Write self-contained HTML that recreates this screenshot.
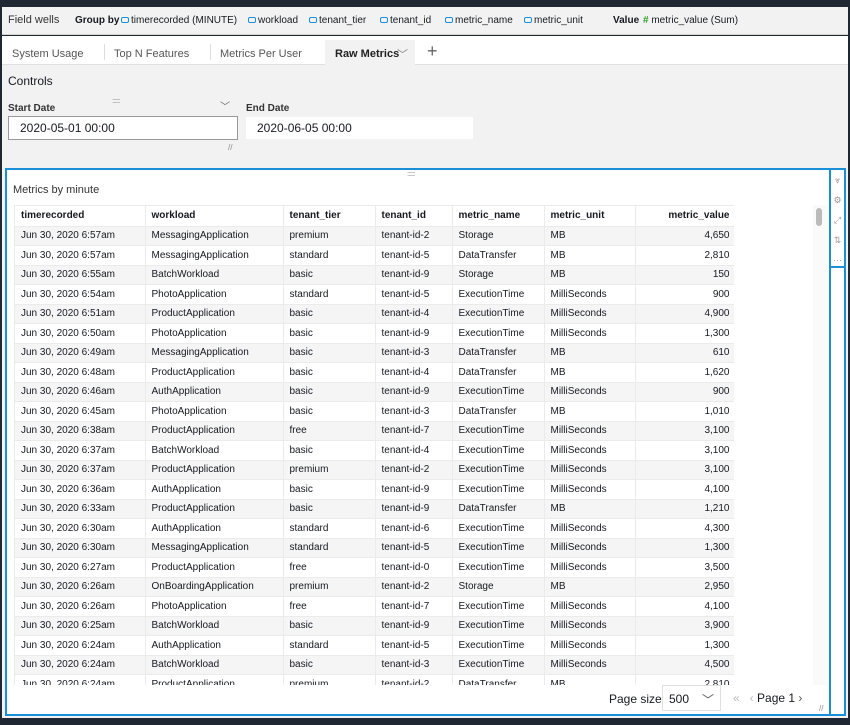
<!DOCTYPE html>
<html><head><meta charset="utf-8"><style>
*{margin:0;padding:0;box-sizing:border-box}
body{width:850px;height:725px;background:#1f2733;font-family:"Liberation Sans",sans-serif;position:relative;overflow:hidden;color:#16191f}
.abs{position:absolute}
#fw{left:2px;top:7px;width:846px;height:28px;background:#f2f2f2;border-bottom:1px solid #d5d5d5;font-size:10px;white-space:nowrap}
#fw span{position:absolute;top:8px}
#tabs{left:2px;top:36px;width:846px;height:29px;background:#fff;border-bottom:1px solid #e0e0e0;font-size:11px;color:#555}
#tabs span{position:absolute;top:11px}
#main{left:2px;top:65px;width:846px;height:653px;background:#f2f2f2}
.inp{background:#fff;font-size:12px;padding-left:11px;line-height:22px}
#vis{left:5px;top:168px;width:826px;height:548px;background:#fff;border:2px solid #1a8fd6}
table{border-collapse:collapse;font-size:10px;table-layout:fixed}
td,th{border-right:1px solid #ebebeb;border-bottom:1px solid #ebebeb;padding:0 6px;height:19.5px;text-align:left;white-space:nowrap;overflow:hidden}
th{height:20px;font-weight:bold}
tr:nth-child(odd) td{background:#f5f5f5}
.r{text-align:right}
.ic{display:inline-block;width:8px;height:6px;border:1px solid #1a8fd6;border-radius:2px;margin-right:2px;vertical-align:0}
</style></head><body>
<div id="fw" class="abs">
<span style="left:6px;font-size:11px;top:7px;color:#333">Field wells</span>
<span style="left:73px;font-weight:bold">Group by</span>
<span style="left:119px"><i class="ic"></i>timerecorded (MINUTE)</span>
<span style="left:246px"><i class="ic"></i>workload</span>
<span style="left:307px"><i class="ic"></i>tenant_tier</span>
<span style="left:378px"><i class="ic"></i>tenant_id</span>
<span style="left:443px"><i class="ic"></i>metric_name</span>
<span style="left:522px"><i class="ic"></i>metric_unit</span>
<span style="left:611px;font-weight:bold">Value</span>
<span style="left:641px"><b style="color:#2ca02c">#</b> metric_value (Sum)</span>
</div>
<div id="tabs" class="abs">
<span style="left:10px;top:12px">System Usage</span>
<div class="abs" style="left:102px;top:8px;width:1px;height:16px;background:#ddd"></div>
<span style="left:112px;top:12px">Top N Features</span>
<div class="abs" style="left:208px;top:8px;width:1px;height:16px;background:#ddd"></div>
<div class="abs" style="left:323px;top:4px;width:90px;height:26px;background:#f2f2f2"></div>
<span style="left:218px;top:12px">Metrics Per User</span>
<span style="left:333px;top:12px;font-weight:bold;color:#222">Raw Metrics</span>
<span style="left:395px;top:10px;color:#888">﹀</span>
<span style="left:425px;top:5px;font-size:18px;color:#666">+</span>
</div>
<div id="main" class="abs">
<div class="abs" style="left:6px;top:9px;font-size:12px">Controls</div>
<div class="abs" style="left:110px;top:33px;font-size:7px;color:#999;letter-spacing:-1px">::::::::</div>
<div class="abs" style="left:218px;top:33px;font-size:10px;color:#666">﹀</div>
<div class="abs" style="left:6px;top:38px;font-size:10px;font-weight:bold;color:#333">Start Date</div>
<div class="abs" style="left:244px;top:38px;font-size:10px;font-weight:bold;color:#333">End Date</div>
<div class="abs inp" style="left:6px;top:51px;width:230px;height:24px;border:1px solid #999">2020-05-01 00:00</div>
<div class="abs inp" style="left:244px;top:52px;width:227px;height:22px">2020-06-05 00:00</div>
<div class="abs" style="left:226px;top:78px;font-size:8px;color:#888">//</div>
</div>
<div id="vis" class="abs">
<div class="abs" style="left:400px;top:1px;font-size:7px;color:#999;letter-spacing:-1px">::::::::</div>
<div class="abs" style="left:6px;top:14px;font-size:11px;color:#333">Metrics by minute</div>
<div class="abs" style="left:7px;top:35px;width:720px;height:480px;overflow:hidden;border-left:1px solid #ebebeb;border-top:1px solid #ebebeb">
<table style="width:721px">
<colgroup><col style="width:130px"><col style="width:138px"><col style="width:92px"><col style="width:77px"><col style="width:92px"><col style="width:91px"><col style="width:101px"></colgroup>
<tr><th>timerecorded</th><th>workload</th><th>tenant_tier</th><th>tenant_id</th><th>metric_name</th><th>metric_unit</th><th class="r">metric_value</th></tr>
<tbody>
<tr><td>Jun 30, 2020 6:57am</td><td>MessagingApplication</td><td>premium</td><td>tenant-id-2</td><td>Storage</td><td>MB</td><td class="r">4,650</td></tr>
<tr><td>Jun 30, 2020 6:57am</td><td>MessagingApplication</td><td>standard</td><td>tenant-id-5</td><td>DataTransfer</td><td>MB</td><td class="r">2,810</td></tr>
<tr><td>Jun 30, 2020 6:55am</td><td>BatchWorkload</td><td>basic</td><td>tenant-id-9</td><td>Storage</td><td>MB</td><td class="r">150</td></tr>
<tr><td>Jun 30, 2020 6:54am</td><td>PhotoApplication</td><td>standard</td><td>tenant-id-5</td><td>ExecutionTime</td><td>MilliSeconds</td><td class="r">900</td></tr>
<tr><td>Jun 30, 2020 6:51am</td><td>ProductApplication</td><td>basic</td><td>tenant-id-4</td><td>ExecutionTime</td><td>MilliSeconds</td><td class="r">4,900</td></tr>
<tr><td>Jun 30, 2020 6:50am</td><td>PhotoApplication</td><td>basic</td><td>tenant-id-9</td><td>ExecutionTime</td><td>MilliSeconds</td><td class="r">1,300</td></tr>
<tr><td>Jun 30, 2020 6:49am</td><td>MessagingApplication</td><td>basic</td><td>tenant-id-3</td><td>DataTransfer</td><td>MB</td><td class="r">610</td></tr>
<tr><td>Jun 30, 2020 6:48am</td><td>ProductApplication</td><td>basic</td><td>tenant-id-4</td><td>DataTransfer</td><td>MB</td><td class="r">1,620</td></tr>
<tr><td>Jun 30, 2020 6:46am</td><td>AuthApplication</td><td>basic</td><td>tenant-id-9</td><td>ExecutionTime</td><td>MilliSeconds</td><td class="r">900</td></tr>
<tr><td>Jun 30, 2020 6:45am</td><td>PhotoApplication</td><td>basic</td><td>tenant-id-3</td><td>DataTransfer</td><td>MB</td><td class="r">1,010</td></tr>
<tr><td>Jun 30, 2020 6:38am</td><td>ProductApplication</td><td>free</td><td>tenant-id-7</td><td>ExecutionTime</td><td>MilliSeconds</td><td class="r">3,100</td></tr>
<tr><td>Jun 30, 2020 6:37am</td><td>BatchWorkload</td><td>basic</td><td>tenant-id-4</td><td>ExecutionTime</td><td>MilliSeconds</td><td class="r">3,100</td></tr>
<tr><td>Jun 30, 2020 6:37am</td><td>ProductApplication</td><td>premium</td><td>tenant-id-2</td><td>ExecutionTime</td><td>MilliSeconds</td><td class="r">3,100</td></tr>
<tr><td>Jun 30, 2020 6:36am</td><td>AuthApplication</td><td>basic</td><td>tenant-id-9</td><td>ExecutionTime</td><td>MilliSeconds</td><td class="r">4,100</td></tr>
<tr><td>Jun 30, 2020 6:33am</td><td>ProductApplication</td><td>basic</td><td>tenant-id-9</td><td>DataTransfer</td><td>MB</td><td class="r">1,210</td></tr>
<tr><td>Jun 30, 2020 6:30am</td><td>AuthApplication</td><td>standard</td><td>tenant-id-6</td><td>ExecutionTime</td><td>MilliSeconds</td><td class="r">4,300</td></tr>
<tr><td>Jun 30, 2020 6:30am</td><td>MessagingApplication</td><td>standard</td><td>tenant-id-5</td><td>ExecutionTime</td><td>MilliSeconds</td><td class="r">1,300</td></tr>
<tr><td>Jun 30, 2020 6:27am</td><td>ProductApplication</td><td>free</td><td>tenant-id-0</td><td>ExecutionTime</td><td>MilliSeconds</td><td class="r">3,500</td></tr>
<tr><td>Jun 30, 2020 6:26am</td><td>OnBoardingApplication</td><td>premium</td><td>tenant-id-2</td><td>Storage</td><td>MB</td><td class="r">2,950</td></tr>
<tr><td>Jun 30, 2020 6:26am</td><td>PhotoApplication</td><td>free</td><td>tenant-id-7</td><td>ExecutionTime</td><td>MilliSeconds</td><td class="r">4,100</td></tr>
<tr><td>Jun 30, 2020 6:25am</td><td>BatchWorkload</td><td>basic</td><td>tenant-id-9</td><td>ExecutionTime</td><td>MilliSeconds</td><td class="r">3,900</td></tr>
<tr><td>Jun 30, 2020 6:24am</td><td>AuthApplication</td><td>standard</td><td>tenant-id-5</td><td>ExecutionTime</td><td>MilliSeconds</td><td class="r">1,300</td></tr>
<tr><td>Jun 30, 2020 6:24am</td><td>BatchWorkload</td><td>basic</td><td>tenant-id-3</td><td>ExecutionTime</td><td>MilliSeconds</td><td class="r">4,500</td></tr>
<tr><td>Jun 30, 2020 6:24am</td><td>ProductApplication</td><td>premium</td><td>tenant-id-2</td><td>DataTransfer</td><td>MB</td><td class="r">2,810</td></tr>
</tbody></table></div>
<div class="abs" style="left:806px;top:35px;width:14px;height:480px;background:#fafafa"></div>
<div class="abs" style="left:809px;top:38px;width:6px;height:18px;background:#bbb;border-radius:3px"></div>
<div class="abs" style="left:602px;top:522px;font-size:12px">Page size</div>
<div class="abs" style="left:655px;top:515px;width:59px;height:26px;border:1px solid #e0e0e0;font-size:12px;padding:6px 0 0 6px">500<span style="position:absolute;right:6px;top:5px;color:#555">﹀</span></div>
<div class="abs" style="left:726px;top:521px;font-size:12px;color:#bbb">«&nbsp;&nbsp;&nbsp;‹ <span style="color:#16191f">Page 1</span> <span style="color:#555">›</span></div>
<div class="abs" style="left:812px;top:534px;font-size:8px;color:#888">//</div>
</div>
<div class="abs" style="left:831px;top:168px;width:15px;height:100px;background:#fff;border:2px solid #1a8fd6;border-left:none;font-size:9px;color:#999;text-align:center;line-height:20px">
<div>⩔</div><div>⚙</div><div>⤢</div><div>⇅</div><div>···</div></div>
<div class="abs" style="left:831px;top:268px;width:15px;height:448px;background:#fff;border-right:2px solid #1a8fd6;border-bottom:2px solid #1a8fd6"></div>
</body></html>
